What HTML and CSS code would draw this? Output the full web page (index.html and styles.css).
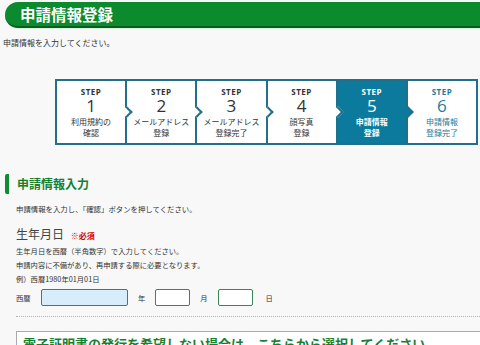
FILE: index.html
```html
<!DOCTYPE html>
<html lang="ja">
<head>
    <meta charset="UTF-8">
    <meta name="viewport" content="width=device-width, initial-scale=1.0">
    <title>申請情報登録</title>
    <link rel="stylesheet" href="styles.css">
</head>
<body>
    <h1 class="page-title">申請情報登録</h1>
    <p class="intro">申請情報を入力してください。</p>

    <ol class="steps">
        <li class="step">
            <span class="step-label">STEP</span>
            <span class="step-num">1</span>
            <span class="step-name">利用規約の<br>確認</span>
        </li>
        <li class="step">
            <span class="step-label">STEP</span>
            <span class="step-num">2</span>
            <span class="step-name">メールアドレス<br>登録</span>
        </li>
        <li class="step">
            <span class="step-label">STEP</span>
            <span class="step-num">3</span>
            <span class="step-name">メールアドレス<br>登録完了</span>
        </li>
        <li class="step">
            <span class="step-label">STEP</span>
            <span class="step-num">4</span>
            <span class="step-name">顔写真<br>登録</span>
        </li>
        <li class="step active">
            <span class="step-label">STEP</span>
            <span class="step-num">5</span>
            <span class="step-name">申請情報<br>登録</span>
        </li>
        <li class="step next">
            <span class="step-label">STEP</span>
            <span class="step-num">6</span>
            <span class="step-name">申請情報<br>登録完了</span>
        </li>
    </ol>

    <div class="section">
        <h2 class="section-title">申請情報入力</h2>
        <p class="lead">申請情報を入力し、「確認」ボタンを押してください。</p>

        <div class="field">
            <div class="field-title">生年月日 <span class="required">※必須</span></div>
            <p class="note">生年月日を西暦（半角数字）で入力してください。</p>
            <p class="note">申請内容に不備があり、再申請する際に必要となります。</p>
            <p class="note">例）西暦1980年01月01日</p>
            <div class="date-row">
                <span class="unit">西暦</span>
                <input type="text" class="input year">
                <span class="unit">年</span>
                <input type="text" class="input short">
                <span class="unit">月</span>
                <input type="text" class="input short">
                <span class="unit last">日</span>
            </div>
        </div>

        <div class="option-box">
            <p class="option-title">電子証明書の発行を希望しない場合は、こちらから選択してください</p>
        </div>
    </div>
</body>
</html>
```

FILE: styles.css
```css
body {
    margin: 0;
    padding: 0;
    font-family: "Noto Sans CJK JP", "Noto Sans", sans-serif;
    background-color: #f8f8f8;
    color: #333;
    overflow: hidden;
}
p {
    margin: 0;
}
.page-title {
    margin: 2px 0 0 5px;
    height: 24px;
    padding-left: 15px;
    background-color: #0c8a2e;
    border-bottom: 2px solid #0a5c20;
    box-shadow: 0 1px 0 #d7f3db;
    border-radius: 13px 0 0 13px;
    color: #fff;
    font-size: 15.5px;
    font-weight: bold;
    line-height: 24px;
}
.intro {
    margin: 9px 0 0 3px;
    font-size: 8px;
    line-height: 12px;
    color: #333;
}
.steps {
    list-style: none;
    display: flex;
    margin: 30px 0 0 55px;
    padding: 0;
    width: 419px;
    border: 2px solid #216f8a;
    background: #fff;
}
.step {
    position: relative;
    flex: 1;
    height: 57px;
    padding-top: 5px;
    display: flex;
    flex-direction: column;
    align-items: center;
    text-align: center;
    background: #fff;
    color: #333;
}
.step + .step {
    border-left: 2px solid #216f8a;
}
.step:not(:last-child)::after {
    content: "";
    position: absolute;
    right: -6px;
    top: 27px;
    width: 6px;
    height: 6px;
    background: inherit;
    border-top: 2px solid #216f8a;
    border-right: 2px solid #216f8a;
    transform: rotate(45deg);
    z-index: 1;
}
.step-label {
    font-family: "Open Sans", "Noto Sans", sans-serif;
    font-size: 8px;
    font-weight: bold;
    line-height: 11px;
    letter-spacing: 0.5px;
}
.step-num {
    font-family: "Open Sans", "Noto Sans", sans-serif;
    font-size: 17px;
    line-height: 18px;
}
.step-name {
    margin-top: 1px;
    font-size: 8px;
    line-height: 11px;
    white-space: nowrap;
}
.step.active {
    background: #0b7a9c;
    color: #fff;
}
.step.active .step-name {
    font-weight: bold;
}
.step.next {
    color: #1b7c9c;
}
.section {
    margin-top: 29px;
}
.section-title {
    margin: 0 0 0 5px;
    padding-left: 8px;
    border-left: 4px solid #0f8a33;
    border-radius: 2px;
    height: 20px;
    line-height: 20px;
    font-size: 12px;
    font-weight: bold;
    color: #15812f;
}
.lead {
    margin: 9px 0 0 16px;
    font-size: 7.4px;
    line-height: 12px;
}
.field {
    margin: 11px 0 0 16px;
    padding-bottom: 10px;
    border-bottom: 1px dotted #b5b5b5;
}
.field-title {
    font-size: 12px;
    line-height: 16px;
    color: #444;
}
.required {
    margin-left: 4px;
    font-size: 8px;
    font-weight: bold;
    color: #d10000;
}
.note {
    font-size: 7.3px;
    line-height: 14px;
}
.date-row {
    display: flex;
    align-items: center;
    margin-top: 3px;
    font-size: 7.3px;
}
.unit {
    width: 25px;
}
.date-row .input + .unit {
    width: auto;
    margin: 0 10px;
}
.date-row .input + .unit.last {
    margin-left: 13px;
}
.input {
    box-sizing: border-box;
    height: 17px;
    border: 1.5px solid #3a8553;
    border-radius: 2px;
    background: #fff;
    padding: 0;
}
.input.year {
    width: 87px;
    background: #d7eefa;
}
.input.short {
    width: 35px;
}
.option-box {
    margin: 14px 0 0 16px;
    border: 1px solid #aaa;
    border-right: none;
    background: #fff;
    padding: 3px 6px 6px;
}
.option-title {
    font-size: 13px;
    font-weight: bold;
    line-height: 18px;
    color: #15812f;
    white-space: nowrap;
}
```
